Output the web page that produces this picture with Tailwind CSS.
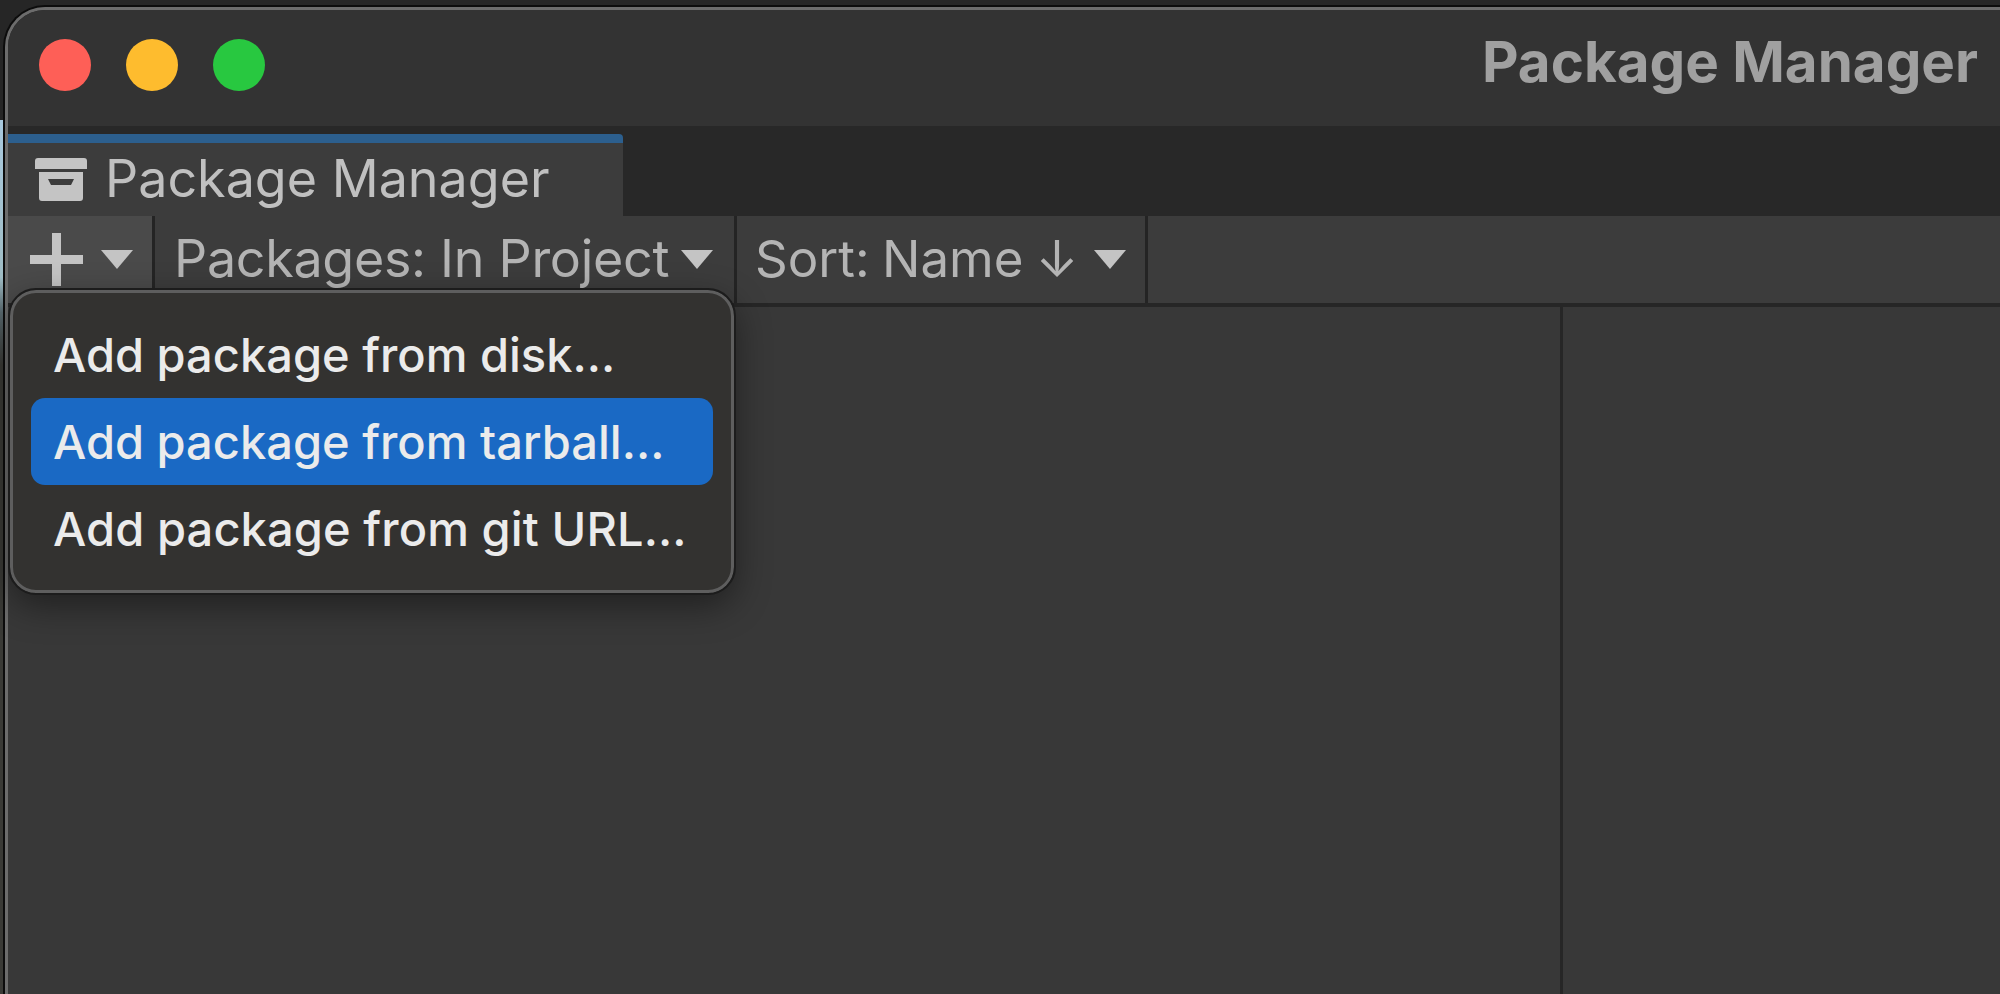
<!DOCTYPE html>
<html lang="en">
<head>
  <meta charset="UTF-8">
  <title>Package Manager</title>
  <script src="https://cdn.jsdelivr.net/npm/@tailwindcss/browser@4"></script>
</head>
<body class="bg-[#262626] w-[2000px] h-[994px] overflow-hidden font-['Inter',sans-serif]">
  <div class="relative h-full pt-[5px]">
    <!-- sliver of desktop left of the window -->
    <div class="absolute left-0 top-[120px] w-[4px] h-[874px] bg-[linear-gradient(180deg,#a9c9de_0%,#9fbcc4_18%,#5a6a70_22%,#3a3a36_28%,#3a3a36_100%)]"></div>
    <div class="relative ml-[3px] h-[989px] rounded-tl-[42px] border-t-[2px] border-l-[2px] border-[#0c0c0c]">
      <div class="h-full flex flex-col rounded-tl-[40px] overflow-hidden border-t-[3px] border-l-[3px] border-[#6c6c6c]">
        <!-- title bar -->
        <div class="h-[116px] shrink-0 bg-[#333333] flex items-center pl-[31px] pr-[22px] pb-[6px]">
          <div class="flex gap-[35px]">
            <div class="w-[52px] h-[52px] rounded-full bg-[#fe5f57]"></div>
            <div class="w-[52px] h-[52px] rounded-full bg-[#febc2e]"></div>
            <div class="w-[52px] h-[52px] rounded-full bg-[#28c840]"></div>
          </div>
          <span class="ml-auto text-[56.5px] font-bold text-[#a0a0a0] leading-none -translate-y-[3px]">Package Manager</span>
        </div>
        <!-- tab strip -->
        <div class="h-[90px] shrink-0 bg-[#282828] pt-[8px] flex">
          <div class="w-[615px] flex flex-col">
            <div class="h-[9px] bg-[#2c5f8e] rounded-tr-[4px]"></div>
            <div class="flex-1 bg-[#3c3c3c] flex items-center pl-[27px] gap-[18px]">
              <svg width="52" height="43" viewBox="0 0 52 43" class="shrink-0 text-[#c4c4c4]">
                <path fill="currentColor" d="M3 0H49a3 3 0 0 1 3 3V11H0V3a3 3 0 0 1 3-3Z"/>
                <path fill="currentColor" fill-rule="evenodd" d="M4 14H48V40a3 3 0 0 1-3 3H7a3 3 0 0 1-3-3ZM13 21 16 27H36L39 21Z"/>
              </svg>
              <span class="text-[52px] text-[#c0c0c0] leading-none -translate-y-[1px]">Package Manager</span>
            </div>
          </div>
        </div>
        <!-- toolbar -->
        <div class="h-[91px] shrink-0 bg-[#3c3c3c] border-b-[4px] border-[#262626] flex">
          <div class="w-[147px] flex items-center bg-[#4a4a4a] border-r-[3px] border-[#242424] pl-[22px]">
            <svg width="53" height="53" viewBox="0 0 53 53" class="text-[#c4c4c4]"><path fill="currentColor" d="M22 0h9v22h22v9H31v22h-9V31H0v-9h22Z"/></svg>
            <svg width="32" height="19" viewBox="0 0 32 19" class="ml-[18px] text-[#c4c4c4]"><path fill="currentColor" d="M0 0H32L16 19Z"/></svg>
          </div>
          <div class="w-[582px] flex items-center border-r-[3px] border-[#242424] pl-[19px]">
            <span class="text-[52px] tracking-[-0.3px] text-[#b4b4b4] leading-none -translate-y-[1px]">Packages: In Project</span>
            <svg width="32" height="19" viewBox="0 0 32 19" class="ml-[12px] text-[#c4c4c4]"><path fill="currentColor" d="M0 0H32L16 19Z"/></svg>
          </div>
          <div class="w-[411px] flex items-center border-r-[3px] border-[#242424] pl-[18px]">
            <span class="text-[51px] [word-spacing:-2px] text-[#b4b4b4] leading-none -translate-y-[1px]">Sort: Name ↓</span>
            <svg width="32" height="19" viewBox="0 0 32 19" class="ml-[16px] text-[#c4c4c4]"><path fill="currentColor" d="M0 0H32L16 19Z"/></svg>
          </div>
        </div>
        <!-- body -->
        <div class="flex-1 bg-[#383838] flex">
          <div class="w-[1555px] border-r-[3px] border-[#262626]"></div>
        </div>
      </div>
    </div>
    <!-- add menu -->
    <div class="absolute left-[10px] top-[290px] w-[724px] h-[303px] rounded-[26px] bg-[#333230] border-[3px] border-[#5e5e5e] outline-[2px] outline-[#1c1c1c] shadow-[0_12px_36px_rgba(0,0,0,0.45)] px-[18px] pt-[18px] text-[#ebebeb] text-[47px] font-medium">
      <div class="h-[87px] flex items-center px-[22px] pt-[2px]">Add package from disk...</div>
      <div class="h-[87px] flex items-center px-[22px] pt-[2px] rounded-[14px] bg-[#1a69c4]">Add package from tarball...</div>
      <div class="h-[87px] flex items-center px-[22px] pt-[2px] tracking-[0.1px]">Add package from git URL...</div>
    </div>
  </div>
</body>
</html>
